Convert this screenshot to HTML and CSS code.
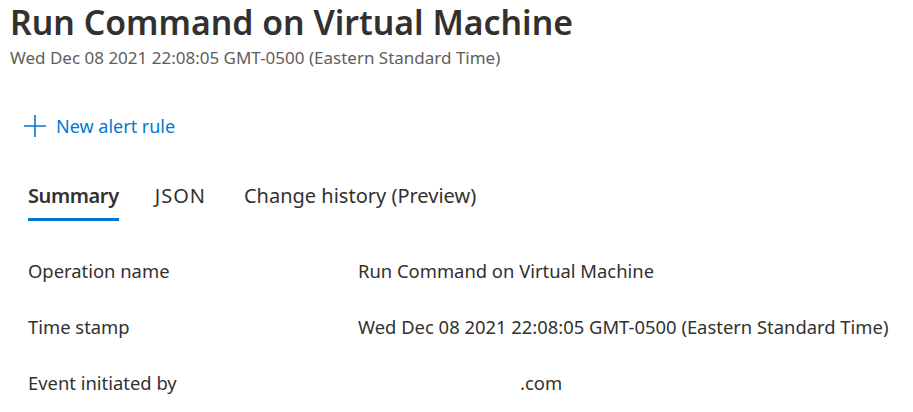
FILE: index.html
```html
<!DOCTYPE html>
<html>
<head>
<meta charset="utf-8">
<link rel="stylesheet" href="styles.css">
</head>
<body>
<div class="page">
  <header class="header">
    <h1 class="title">Run Command on Virtual Machine</h1>
    <div class="subtitle">Wed Dec 08 2021 22:08:05 GMT-0500 (Eastern Standard Time)</div>
  </header>
  <div class="content">
    <button class="action">
      <svg class="plus" width="22" height="22" viewBox="0 0 22 22"><path d="M11 0V22M0 11H22" stroke="#0078d4" stroke-width="1.6" fill="none"/></svg>
      <span>New alert rule</span>
    </button>
    <nav class="tabs">
      <div class="tab active">Summary</div>
      <div class="tab json">JSON</div>
      <div class="tab">Change history (Preview)</div>
    </nav>
    <div class="rows">
      <div class="row"><div class="label">Operation name</div><div class="value">Run Command on Virtual Machine</div></div>
      <div class="row"><div class="label">Time stamp</div><div class="value">Wed Dec 08 2021 22:08:05 GMT-0500 (Eastern Standard Time)</div></div>
      <div class="row"><div class="label">Event initiated by</div><div class="value"><span class="redacted"></span>.com</div></div>
    </div>
  </div>
</div>
</body>
</html>
```
FILE: styles.css
```css
html, body {
  margin: 0;
  padding: 0;
  background: #ffffff;
}
body {
  font-family: "Noto Sans", "Open Sans", sans-serif;
  color: #323130;
}
.page {
  padding: 0 0 0 10px;
}
.header {
  display: flex;
  flex-direction: column;
}
.title {
  margin: 0;
  font-size: 33.8px;
  font-weight: 600;
  line-height: 44px;
  color: #323130;
}
.subtitle {
  margin-top: 3px;
  font-size: 17px;
  line-height: 22px;
  color: #605e5c;
}
.content {
  padding-left: 14px;
  display: flex;
  flex-direction: column;
  align-items: flex-start;
}
.action {
  margin-top: 45px;
  display: flex;
  align-items: center;
  gap: 10px;
  border: 0;
  background: none;
  padding: 0;
  font-family: inherit;
  font-size: 18px;
  color: #0078d4;
  height: 24px;
}
.tabs {
  margin-top: 44px;
  display: flex;
  gap: 36px;
  padding-left: 4px;
}
.tab {
  font-size: 20px;
  line-height: 28px;
  padding-bottom: 8px;
  border-bottom: 3px solid transparent;
}
.tab.json {
  letter-spacing: 1px;
  margin-right: 2px;
}
.tab.active {
  font-weight: 600;
  letter-spacing: -0.4px;
  border-bottom-color: #0078d4;
}
.rows {
  margin-top: 21px;
  padding-left: 4px;
  display: flex;
  flex-direction: column;
}
.row {
  display: flex;
  height: 56px;
  align-items: center;
  font-size: 18.4px;
}
.label {
  width: 330px;
}
.redacted {
  display: inline-block;
  width: 162px;
}
```
